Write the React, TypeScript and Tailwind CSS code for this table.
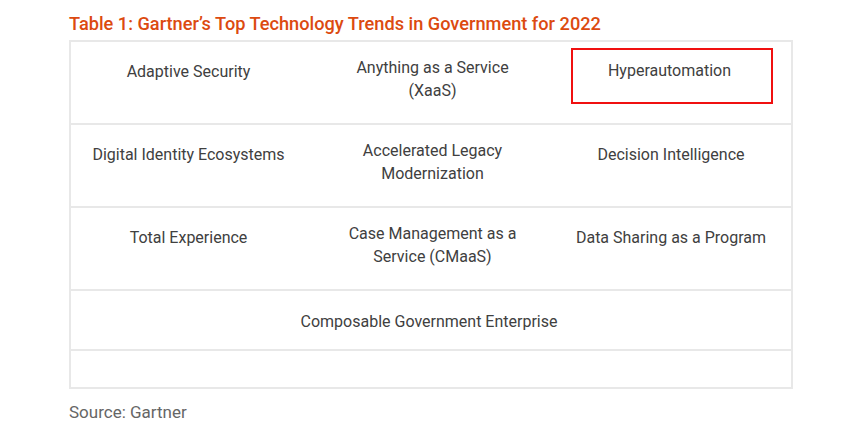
type Cell = { text: string; wrap?: boolean; boxed?: boolean };

const rows: Cell[][] = [
  [
    { text: "Adaptive Security" },
    { text: "Anything as a Service (XaaS)", wrap: true },
    { text: "Hyperautomation", boxed: true },
  ],
  [
    { text: "Digital Identity Ecosystems" },
    { text: "Accelerated Legacy Modernization", wrap: true },
    { text: "Decision Intelligence" },
  ],
  [
    { text: "Total Experience" },
    { text: "Case Management as a Service (CMaaS)", wrap: true },
    { text: "Data Sharing as a Program" },
  ],
];

export default function App() {
  return (
    <div className="w-[865px] h-[430px] bg-white pl-[69px] pt-[12px] font-['Roboto',sans-serif]">
      <h3 className="text-[18.2px] leading-[24px] font-medium text-[#dc4a10]">
        Table 1: Gartner’s Top Technology Trends in Government for 2022
      </h3>
      <div className="mt-[4px] w-[724px] border-2 border-[#e8e8e8] text-[16px] leading-[23px] text-[#404040]">
        {rows.map((row, i) => (
          <div key={i} className="grid grid-cols-3 h-[83px] border-b-2 border-[#e8e8e8]">
            {row.map((cell, j) =>
              cell.boxed ? (
                <div key={j} className="pl-[20px] pr-[18px] pt-[6px]">
                  <div className="h-[56px] border-2 border-[#f01010] pt-[9px] pr-[5px] text-center">
                    {cell.text}
                  </div>
                </div>
              ) : (
                <div
                  key={j}
                  className={
                    (cell.wrap ? "pl-[32px] pr-[29px] pt-[14px] " : "px-[8px] pt-[18px] ") +
                    (j === 0 ? "pr-[10px] pl-[5px] text-center" : "text-center")
                  }
                >
                  {cell.text}
                </div>
              )
            )}
          </div>
        ))}
        <div className="h-[60px] border-b-2 border-[#e8e8e8] pt-[19px] pr-[4px] text-center">
          Composable Government Enterprise
        </div>
        <div className="h-[36px]" />
      </div>
      <p className="mt-[12px] text-[17px] leading-[22px] text-[#666]">Source: Gartner</p>
    </div>
  );
}
